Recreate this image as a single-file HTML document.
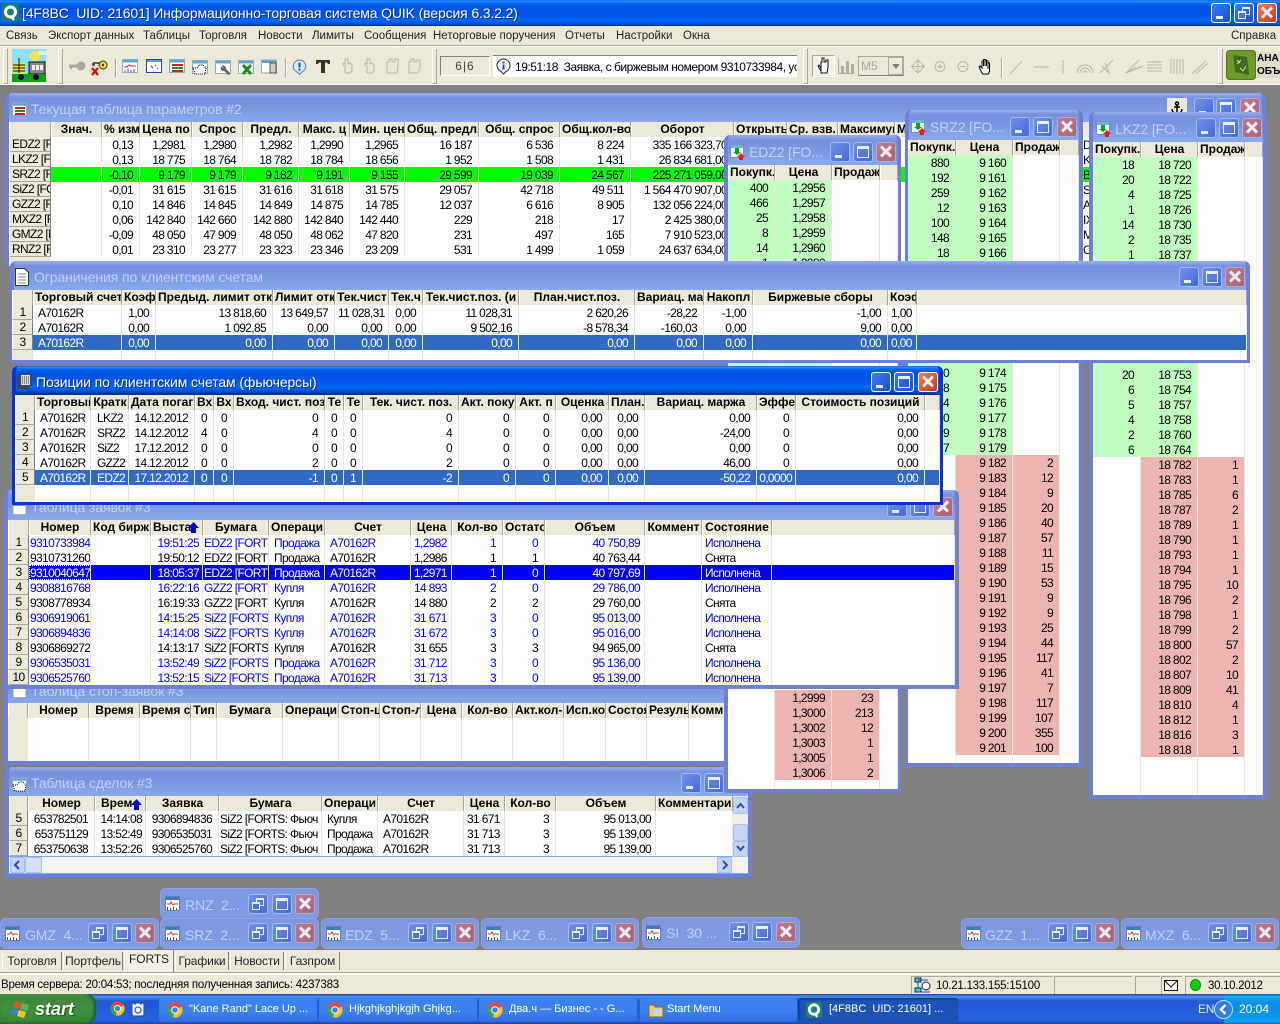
<!DOCTYPE html>
<html><head><meta charset="utf-8"><title>QUIK</title>
<style>
html,body{margin:0;padding:0}
body{position:relative;width:1280px;height:1024px;overflow:hidden;background:#808080;font-family:"Liberation Sans",sans-serif;font-size:12px;color:#000}
.a{position:absolute;white-space:nowrap}
.bar{position:absolute;left:0;width:1280px;background:#ECE9D8}
.w{position:absolute;box-sizing:border-box;border:4px solid #6E7FD8;border-top:0;border-radius:6px 6px 0 0;background:linear-gradient(#9AAEEE 0,#7892DE 5px,#7A96E0 14px,#86A9EA 28px,#86A9EA 32px)}
.w.ac{border-color:#0831D9;background:linear-gradient(#0058EE,#3593FF 1px,#127DFF 2px,#0262EE 4px,#0054E3 7px,#0055EB 15px,#026AFE 21px,#0052D6 25px,#003092 28px)}
.t{position:absolute;white-space:nowrap;font-size:14px;line-height:18px;letter-spacing:-.1px;color:#C3D2F5}
.t.on{color:#fff;text-shadow:1px 1px 0 #0A2C9C}
.b{position:absolute;display:block;box-sizing:border-box;width:20px;height:20px;border:1px solid #A3BBF2;border-radius:3px;background:linear-gradient(135deg,#7092EA,#4467DC)}
.b.x{background:linear-gradient(135deg,#BB7C90,#A96478);border-color:#B9A9CC}
.on .b,.b.on{border-color:#fff;background:linear-gradient(135deg,#3C7BEF,#1B4FD8)}
.b.x.on{background:linear-gradient(135deg,#E8805C,#C8381A)}
.mn::after{content:"";position:absolute;left:4px;top:12px;width:7px;height:3px;background:#EAF0FF}
.mx::after{content:"";position:absolute;left:3px;top:3px;width:12px;height:12px;box-sizing:border-box;border:1px solid #EAF0FF;border-top-width:3px}
.rs::before{content:"";position:absolute;left:7px;top:3px;width:8px;height:8px;box-sizing:border-box;border:1px solid #EAF0FF;border-top-width:2px}
.rs::after{content:"";position:absolute;left:3px;top:7px;width:8px;height:8px;box-sizing:border-box;border:1px solid #EAF0FF;border-top-width:2px;background:#4F73DE}
.x::before,.x::after{content:"";position:absolute;left:2px;top:7px;width:14px;height:3px;background:#F3ECF2}
.x::before{transform:rotate(45deg)}.x::after{transform:rotate(-45deg)}
table{position:absolute;border-collapse:separate;border-spacing:0;table-layout:fixed;background:#fff;font-size:12px}
td,th{height:15px;box-sizing:border-box;overflow:hidden;white-space:nowrap;line-height:15px}
td{padding:1px 6px 0 3px;line-height:14px;text-align:right;letter-spacing:-.65px;border-right:1px solid #ECE9D8}
th{padding:0 1px;background:#ECE9D8;text-align:center;font-weight:bold;font-size:12px;border-left:1px solid #fff;border-right:1px solid #ACA899}
td.h{background:#ECE9D8;text-align:center;padding:0;line-height:14px;border-left:1px solid #fff;border-right:1px solid #808080;border-bottom:1px solid #ACA899}
td.n{text-align:left;padding:0 0 0 2px}
td.l{text-align:left;padding-left:5px}
td.l1{text-align:left;padding-left:1px}
td.c{text-align:left;padding-left:3px}
tr.s td{background:#316AC5;color:#fff}
tr.s td.h{background:#ECE9D8;color:#000}
tr.sb td{background:#00f;color:#fff}
tr.sb td.h{background:#ECE9D8;color:#000}
tr.gr td{background:#0f0}tr.gr td.n{background:#ECE9D8}
tr.bl td{color:#00f}tr.bl td.h{color:#000}
td.g{background:#C1FFC1}td.p{background:#EDB5B1}
tr.sp td{height:0;line-height:0;font-size:0;padding:0}
.grip{position:absolute;top:48px;width:3px;height:34px;border:1px solid;border-color:#fff #ACA899 #ACA899 #fff}
.m{position:absolute;top:29px;font-size:11.5px;line-height:14px;white-space:nowrap;color:#222}
.tab{position:absolute;top:952px;height:18px;box-sizing:border-box;border-left:1px solid #fff;border-right:1px solid #808080;text-align:center;font-size:12px;line-height:18px;letter-spacing:-.1px;color:#222}
.st{position:absolute;top:976px;height:18px;box-sizing:border-box;border-left:1px solid #ACA899;border-top:1px solid #ACA899;font-size:11.5px;line-height:18px;white-space:nowrap}
.tb{position:absolute;top:998px;height:24px;box-sizing:border-box;border-radius:3px;background:linear-gradient(#3B7FF0,#3C81F3 60%,#3169DF);color:#fff;font-size:11px;line-height:23px;white-space:nowrap;padding-left:30px}
.tb svg{position:absolute;left:8px;top:4px}
.ic{position:absolute}
</style></head><body>
<svg width="0" height="0" style="position:absolute">
<symbol id="chrome" viewBox="0 0 16 16"><circle cx="8" cy="8" r="7.5" fill="#E8453C"/><path d="M8 8L14.6 4.5A7.5 7.5 0 0 1 6 15.3Z" fill="#F9C31D"/><path d="M8 8L6 15.3A7.5 7.5 0 0 1 1.4 4.5Z" fill="#2FA84F"/><circle cx="8" cy="8" r="3.8" fill="#fff"/><circle cx="8" cy="8" r="2.8" fill="#3B80EE"/></symbol>
<symbol id="cw" viewBox="0 0 15 15"><rect x=".5" y=".5" width="14" height="14" fill="#fff" stroke="#6A7FA5"/><rect x="1" y="1" width="13" height="3" fill="#3E78C8"/><path d="M2 8h3l1-2 2 3 1-1h4" fill="none" stroke="#E03030"/><path d="M2.5 14v-3M5.5 14v-2M8.5 14v-3M11.5 14v-2" stroke="#2050C0"/></symbol>
<symbol id="dom" viewBox="0 0 16 16"><rect x=".5" y=".5" width="13" height="13" fill="#F3F8FF" stroke="#7A8FB5"/><rect x="1" y="1" width="12" height="3" fill="#6BB4E8"/><path d="M5 4h4v4h2l-4 3-4-3h2z" fill="#16A016"/><path d="M9 16v-3H7l4-4 4 4h-2v3z" fill="#E02020"/></symbol>
<symbol id="tb" viewBox="0 0 16 14"><rect x=".5" y=".5" width="15" height="13" fill="#fff" stroke="#9AA"/><rect x="1" y="1" width="14" height="2.5" fill="#5AA5D8"/></symbol>
</svg>

<!-- main title bar -->
<div class="bar" style="top:0;height:26px;background:linear-gradient(#0058EE,#3593FF 1px,#127DFF 2px,#0262EE 4px,#0054E3 7px,#0055EB 15px,#026AFE 20px,#0052D6 24px,#003092 26px)"></div>
<svg class="ic" style="left:2px;top:4px" width="17" height="17" viewBox="0 0 17 17"><rect width="17" height="17" rx="2" fill="#1F7F6A"/><circle cx="8.5" cy="8" r="5" fill="none" stroke="#fff" stroke-width="3"/><path d="M9 12l3 4" stroke="#fff" stroke-width="2.4"/></svg>
<div class="t on" style="left:22px;top:4px;font-size:14px;letter-spacing:-.13px">[4F8BC&nbsp; UID: 21601] Информационно-торговая система QUIK (версия 6.3.2.2)</div>
<i class="b mn on" style="left:1211px;top:3px"></i><i class="b rs on" style="left:1234px;top:3px"></i><i class="b x on" style="left:1257px;top:3px"></i>

<!-- menu -->
<div class="bar" style="top:26px;height:59px"></div>
<div class="bar" style="top:45px;height:1px;background:#fff;border-top:1px solid #ACA899"></div>
<span class="m" style="left:6px">Связь</span><span class="m" style="left:48px">Экспорт данных</span><span class="m" style="left:143px">Таблицы</span><span class="m" style="left:199px">Торговля</span><span class="m" style="left:258px">Новости</span><span class="m" style="left:312px">Лимиты</span><span class="m" style="left:364px">Сообщения</span><span class="m" style="left:433px">Неторговые поручения</span><span class="m" style="left:565px">Отчеты</span><span class="m" style="left:616px">Настройки</span><span class="m" style="left:683px">Окна</span><span class="m" style="left:1231px">Справка</span>

<!-- toolbar -->
<div class="bar" style="top:84px;height:1px;background:#fff"></div>
<i class="grip" style="left:3px"></i><i class="grip" style="left:58px"></i><i class="grip" style="left:432px"></i><i class="grip" style="left:803px"></i><i class="grip" style="left:1218px"></i>
<svg class="ic" style="left:12px;top:49px" width="34" height="33" viewBox="0 0 34 33"><rect width="34" height="33" fill="#8FE0FA"/><circle cx="23" cy="7" r="5" fill="#FFE23A"/><rect x="26" y="2" width="8" height="4" fill="#E8E8E8"/><rect x="1" y="14" width="12" height="10" fill="#F4E23A"/><path d="M1 16h12M1 19h12M1 22h12M7 9v15" stroke="#111"/><rect x="17" y="13" width="16" height="12" fill="#888" stroke="#111"/><rect x="20" y="16" width="3" height="5" fill="#EEE"/><rect x="24" y="16" width="3" height="5" fill="#EEE"/><rect x="28" y="16" width="3" height="5" fill="#EEE"/><rect y="25" width="34" height="8" fill="#12A012"/><circle cx="9" cy="28" r="3" fill="#111"/><circle cx="24" cy="28" r="3" fill="#111"/></svg>
<svg class="ic" style="left:68px;top:60px" width="18" height="12" viewBox="0 0 18 12"><circle cx="13" cy="6" r="4.5" fill="#A8A8A0"/><rect x="1" y="4.5" width="10" height="3" fill="#A8A8A0"/><rect x="2" y="7" width="2" height="2" fill="#A8A8A0"/></svg>
<svg class="ic" style="left:91px;top:60px" width="17" height="16" viewBox="0 0 17 16"><circle cx="12" cy="5" r="4" fill="#F3D92C" stroke="#333"/><circle cx="12" cy="5" r="1.2" fill="#333"/><path d="M2 3h7M2 3v2h2" stroke="#333" stroke-width="1.5" fill="none"/><path d="M1 8l6 7M7 8l-6 7" stroke="#D81010" stroke-width="2.4"/></svg>
<i class="a" style="left:115px;top:58px;width:1px;height:20px;background:#ACA899;border-right:1px solid #fff"></i>
<svg class="ic" style="left:122px;top:59px" width="16" height="14"><use href="#tb"/><path d="M2 8h3l2-2 2 1h5" fill="none" stroke="#D03030"/><path d="M3 13v-2M6 13v-3M9 13v-2M12 13v-3" stroke="#3060C0"/></svg>
<svg class="ic" style="left:146px;top:59px" width="16" height="14"><rect x=".5" y=".5" width="15" height="13" fill="#fff" stroke="#2040B0"/><rect x="1" y="1" width="14" height="2" fill="#5AA5D8"/><path d="M5 7l2 2M9 6l1 1M11 9l1 1" stroke="#D02020"/></svg>
<svg class="ic" style="left:169px;top:59px" width="16" height="14"><use href="#tb"/><rect x="3" y="5" width="11" height="2" fill="#D02020"/><rect x="3" y="8" width="11" height="2" fill="#18A018"/><rect x="3" y="11" width="11" height="2" fill="#D02020"/></svg>
<svg class="ic" style="left:192px;top:59px" width="16" height="16"><use href="#tb"/><path d="M1 9h4l2-3 4 0 3 3-1 6H3z" fill="#fff" stroke="#000" stroke-dasharray="1 1"/></svg>
<svg class="ic" style="left:215px;top:59px" width="16" height="16"><use href="#tb"/><path d="M7 7a2.6 2.6 0 0 1 3.6 3l4.4 4.4-1.5 1.5-4.4-4.4a2.6 2.6 0 0 1-3-3.6l2 1.6 1-1z" fill="#666" stroke="#333" stroke-width=".5"/></svg>
<svg class="ic" style="left:238px;top:59px" width="16" height="16"><use href="#tb"/><path d="M5 6l8 9M13 6l-8 9" stroke="#1E8C1E" stroke-width="3"/></svg>
<svg class="ic" style="left:261px;top:59px" width="16" height="15"><use href="#tb"/><rect x="9" y="4" width="6" height="10" fill="#ccc" stroke="#555"/></svg>
<i class="a" style="left:285px;top:58px;width:1px;height:20px;background:#ACA899;border-right:1px solid #fff"></i>
<svg class="ic" style="left:292px;top:59px" width="15" height="16" viewBox="0 0 15 16"><path d="M7.5 1a6.2 6.2 0 0 1 2.5 11.9L7.5 15.5 5 12.9A6.2 6.2 0 0 1 7.5 1z" fill="#DCEBFA" stroke="#5080C0"/><rect x="6.5" y="3.5" width="2" height="5" fill="#1848C0"/><rect x="6.5" y="9.5" width="2" height="2" fill="#1848C0"/></svg>
<svg class="ic" style="left:316px;top:60px" width="14" height="13" viewBox="0 0 14 13"><path d="M0 0h14v4h-2l-1-1.500H9V13H5V2.500H3L2 4H0z" fill="#333"/></svg>
<svg class="ic" style="left:340px;top:57px" width="84" height="18" viewBox="0 0 84 18" fill="#ECE9D8" stroke="#B8B5A6"><path d="M5 16V9l-2-1V6l2 1V2h3v5l2-1 2 2v6l-2 2z"/><path d="M27 16V9l-2-1V6l2 1V2h3v5l2-1 2 2v6l-2 2z"/><path d="M47 16V5h2v-3h3v3h3v-3h3v6l-1 8z"/><path d="M69 16V5h2v-3h3v3h3v-2h3v8l-2 5z"/></svg>
<div class="a" style="left:440px;top:56px;width:50px;height:20px;box-sizing:border-box;border:1px solid;border-color:#808080 #fff #fff #808080;text-align:center;line-height:18px;color:#444;letter-spacing:1px">6|6</div>
<div class="a" style="left:493px;top:55px;width:304px;height:22px;background:#fff;border-top:1px solid #808080;box-sizing:border-box;overflow:hidden;line-height:22px;padding-left:22px;letter-spacing:-.47px">19:51:18&nbsp; Заявка, с биржевым номером 9310733984, ус</div>
<svg class="ic" style="left:496px;top:58px" width="15" height="17" viewBox="0 0 15 17"><path d="M7.500 1a6.500 6.500 0 0 1 2.500 12.500L7.500 16 5 13.500A6.500 6.500 0 0 1 7.500 1z" fill="#fff" stroke="#222"/><rect x="6.500" y="6.500" width="2" height="5" fill="#1848C0"/><rect x="6.500" y="3.500" width="2" height="2" fill="#1848C0"/></svg>
<div class="a" style="left:812px;top:55px;width:23px;height:22px;box-sizing:border-box;background:#F4F2E8;border:1px solid;border-color:#ACA899 #fff #fff #ACA899"></div>
<svg class="ic" style="left:816px;top:57px" width="15" height="18" viewBox="0 0 15 18"><path d="M5 16V5h1V1h2v4h2V3h2v7l-1 6zM5 11L3 8l-1 1 3 5" fill="#fff" stroke="#111"/></svg>
<svg class="ic" style="left:838px;top:58px" width="16" height="16"><path d="M.5 0v15.500H16" stroke="#B0AD9E" fill="none"/><rect x="3" y="8" width="3" height="7" fill="#B0AD9E"/><rect x="8" y="3" width="3" height="12" fill="#B0AD9E"/><rect x="13" y="6" width="3" height="9" fill="#B0AD9E"/></svg>
<div class="a" style="left:858px;top:56px;width:46px;height:20px;box-sizing:border-box;border:1px solid #ACA899;border-bottom-color:#808080;line-height:18px;color:#ACA899;padding-left:2px;font-size:12px;background:#ECE9D8">M5</div>
<div class="a" style="left:888px;top:57px;width:15px;height:18px;box-sizing:border-box;border:1px solid #ACA899;background:#ECE9D8"></div>
<svg class="ic" style="left:892px;top:64px" width="8" height="5"><path d="M0 0h8L4 5z" fill="#808080"/></svg>
<svg class="ic" style="left:910px;top:59px" width="70" height="15" viewBox="0 0 70 15" fill="none" stroke="#B8B5A6"><path d="M8 1v13M1.500 7.500h13M8 1L5 4M8 1l3 3M8 14l-3-3M8 14l3-3M1.500 7.500l3-3M1.500 7.500l3 3M14.500 7.500l-3-3M14.500 7.500l-3 3"/><circle cx="30" cy="7.500" r="5"/><path d="M30 5v5M27.500 7.500h5"/><circle cx="53" cy="7.500" r="5"/><path d="M50.500 7.500h5"/></svg>
<svg class="ic" style="left:978px;top:58px" width="16" height="17" viewBox="0 0 16 17"><path d="M4 15L1 9l1-1 2 2V3h1.500v5V1.500H7V8V2h1.500v6V3H10v8V5h1.500v8l-1 3H5z" fill="#fff" stroke="#000"/></svg>
<i class="a" style="left:1001px;top:58px;width:1px;height:20px;background:#ACA899;border-right:1px solid #fff"></i>
<svg class="ic" style="left:1008px;top:58px" width="200" height="17" viewBox="0 0 200 17" fill="none" stroke="#B8B5A6"><path d="M2 16L14 3M26 9h15M55 2v14M69 15a8 8 0 0 1 16 0M72 15a5 5 0 0 1 10 0M75 15a2 2 0 0 1 4 0M92 15L105 2M94 8l8 8M97 5l4 10M118 15L135 8M118 15L131 2M118 15l10-6M139 4h15M139 7h15M139 10h15M139 13h15M163 1v15M166 1v15M169 1v15M172 1v15M175 1v15M184 16L198 3M188 16L200 5"/></svg>
<svg class="ic" style="left:1226px;top:50px" width="30" height="30" viewBox="0 0 30 30"><rect x=".5" y=".5" width="29" height="29" rx="3" fill="#6E9A2E" stroke="#4F7A1C"/><path d="M7 5l14 2 2 18-14-3z" fill="#3F6B1E"/><path d="M11 10l3 3M15 10l-4 4M14 18l3 3 3-5" stroke="#C8DC8E" fill="none"/></svg>
<div class="a" style="left:1257px;top:52px;width:23px;height:26px;overflow:hidden;font-weight:bold;font-size:10px;line-height:13px;background:#DEDCCF">АНА<br>ОБЪ</div>

<!-- W1 params -->
<div class="w" style="left:5px;top:93px;width:1261px;height:173px"></div>
<div class="a" style="left:9px;top:122px;width:1254px;height:144px;background:#fff"></div>
<div class="a" style="left:9px;top:257px;width:41px;height:9px;background:#ECE9D8"></div>
<svg class="ic" style="left:12px;top:102px" width="15" height="14"><use href="#tb"/><rect x="3" y="5" width="10" height="2" fill="#D02020"/><rect x="3" y="8" width="10" height="2" fill="#18A018"/><rect x="3" y="11" width="10" height="2" fill="#D02020"/></svg>
<div class="t" style="left:31px;top:100px">Текущая таблица параметров #2</div>
<div class="a" style="left:1167px;top:98px;width:20px;height:20px;background:#ECE9D8"></div>
<svg class="ic" style="left:1171px;top:101px" width="12" height="14" viewBox="0 0 12 14" fill="none" stroke="#000" stroke-width="1.500"><circle cx="6" cy="2.500" r="1.500"/><path d="M6 4v9M3 6h6M1 8c0 3 2 4.500 5 5 3-.5 5-2 5-5"/></svg>
<i class="b mn" style="left:1194px;top:98px"></i><i class="b mx" style="left:1216px;top:98px"></i><i class="b x" style="left:1240px;top:98px"></i>
<table style="left:9px;top:122px;width:1254px">
<colgroup><col style="width:42px"><col style="width:51px"><col style="width:38px"><col style="width:52px"><col style="width:51px"><col style="width:56px"><col style="width:51px"><col style="width:55px"><col style="width:74px"><col style="width:81px"><col style="width:71px"><col style="width:103px"><col style="width:53px"><col style="width:51px"><col style="width:57px"><col style="width:187px"><col style="width:181px"></colgroup>
<tr><th></th><th>Знач.</th><th>% изм</th><th>Цена по</th><th>Спрос</th><th>Предл.</th><th>Макс. ц</th><th>Мин. цен</th><th>Общ. предл.</th><th>Общ. спрос</th><th>Общ.кол-во</th><th>Оборот</th><th>Открыть</th><th>Ср. взв.</th><th>Максимум</th><th style="text-align:left">М</th><th></th></tr>
<tr><td class="h n">EDZ2 [F</td><td></td><td>0,13</td><td>1,2981</td><td>1,2980</td><td>1,2982</td><td>1,2990</td><td>1,2965</td><td>16 187</td><td>6 536</td><td>8 224</td><td>335 166 323,70</td><td></td><td></td><td></td><td></td><td class="l1">D</td></tr>
<tr><td class="h n">LKZ2 [F</td><td></td><td>0,13</td><td>18 775</td><td>18 764</td><td>18 782</td><td>18 784</td><td>18 656</td><td>1 952</td><td>1 508</td><td>1 431</td><td>26 834 681,00</td><td></td><td></td><td></td><td></td><td class="l1">K</td></tr>
<tr class="gr"><td class="h n">SRZ2 [F</td><td></td><td>-0,10</td><td>9 179</td><td>9 179</td><td>9 182</td><td>9 191</td><td>9 155</td><td>29 599</td><td>19 039</td><td>24 567</td><td>225 271 059,00</td><td></td><td></td><td></td><td></td><td class="l1">B</td></tr>
<tr><td class="h n">SiZ2 [FC</td><td></td><td>-0,01</td><td>31 615</td><td>31 615</td><td>31 616</td><td>31 618</td><td>31 575</td><td>29 057</td><td>42 718</td><td>49 511</td><td>1 564 470 907,00</td><td></td><td></td><td></td><td></td><td class="l1">Si</td></tr>
<tr><td class="h n">GZZ2 [F</td><td></td><td>0,10</td><td>14 846</td><td>14 845</td><td>14 849</td><td>14 875</td><td>14 785</td><td>12 037</td><td>6 616</td><td>8 905</td><td>132 056 224,00</td><td></td><td></td><td></td><td></td><td class="l1">A</td></tr>
<tr><td class="h n">MXZ2 [F</td><td></td><td>0,06</td><td>142 840</td><td>142 660</td><td>142 880</td><td>142 840</td><td>142 440</td><td>229</td><td>218</td><td>17</td><td>2 425 380,00</td><td></td><td></td><td></td><td></td><td class="l1">IX</td></tr>
<tr><td class="h n">GMZ2 [F</td><td></td><td>-0,09</td><td>48 050</td><td>47 909</td><td>48 050</td><td>48 062</td><td>47 820</td><td>231</td><td>497</td><td>165</td><td>7 910 523,00</td><td></td><td></td><td></td><td></td><td class="l1">M</td></tr>
<tr><td class="h n">RNZ2 [F</td><td></td><td>0,01</td><td>23 310</td><td>23 277</td><td>23 323</td><td>23 346</td><td>23 209</td><td>531</td><td>1 499</td><td>1 059</td><td>24 637 634,00</td><td></td><td></td><td></td><td></td><td class="l1">C</td></tr>
</table>

<!-- W5 stop orders -->
<div class="w" style="left:4px;top:675px;width:740px;height:90px"></div>
<svg class="ic" style="left:12px;top:686px" width="15" height="12"><use href="#tb"/></svg>
<div class="t" style="left:31px;top:682px">Таблица стоп-заявок #3</div>
<table style="left:8px;top:703px;width:717px">
<colgroup><col style="width:20px"><col style="width:61px"><col style="width:51px"><col style="width:51px"><col style="width:26px"><col style="width:66px"><col style="width:56px"><col style="width:41px"><col style="width:41px"><col style="width:41px"><col style="width:51px"><col style="width:51px"><col style="width:42px"><col style="width:41px"><col style="width:42px"><col style="width:36px"></colgroup>
<tr><th></th><th>Номер</th><th>Время</th><th>Время с</th><th>Тип</th><th>Бумага</th><th>Операци</th><th>Стоп-ц</th><th>Стоп-л</th><th>Цена</th><th>Кол-во</th><th>Акт.кол-</th><th>Исп.ко</th><th>Состоя</th><th>Резуль</th><th>Комм</th></tr>
<tr style="height:43px"><td class="h" style="height:43px;border:0"></td><td></td><td></td><td></td><td></td><td></td><td></td><td></td><td></td><td></td><td></td><td></td><td></td><td></td><td></td><td></td></tr>
</table>

<!-- W6 trades -->
<div class="w" style="left:5px;top:767px;width:747px;height:111px"></div>
<svg class="ic" style="left:12px;top:776px" width="15" height="16"><use href="#tb"/><path d="M1 9h4l2-3 4 0 3 3-1 6H3z" fill="#fff" stroke="#000" stroke-dasharray="1 1"/></svg>
<div class="t" style="left:31px;top:774px">Таблица сделок #3</div>
<i class="b mn" style="left:681px;top:773px"></i><i class="b mx" style="left:704px;top:773px"></i>
<table style="left:9px;top:796px;width:724px">
<colgroup><col style="width:19px"><col style="width:67px"><col style="width:51px"><col style="width:73px"><col style="width:103px"><col style="width:56px"><col style="width:86px"><col style="width:41px"><col style="width:51px"><col style="width:100px"><col style="width:77px"></colgroup>
<tr><th></th><th>Номер</th><th style="text-align:left;padding-left:5px">Врем</th><th>Заявка</th><th>Бумага</th><th>Операци</th><th>Счет</th><th>Цена</th><th>Кол-во</th><th>Объем</th><th>Комментари</th></tr>
<tr><td class="h">5</td><td>653782501</td><td style="padding-right:3px">14:14:08</td><td>9306894836</td><td class="l1">SiZ2 [FORTS: Фьюч</td><td class="l">Купля</td><td class="l">A70162R</td><td class="c">31 671</td><td>3</td><td style="padding-right:4px">95 013,00</td><td></td></tr>
<tr><td class="h">6</td><td>653751129</td><td style="padding-right:3px">13:52:49</td><td>9306535031</td><td class="l1">SiZ2 [FORTS: Фьюч</td><td class="l">Продажа</td><td class="l">A70162R</td><td class="c">31 713</td><td>3</td><td style="padding-right:4px">95 139,00</td><td></td></tr>
<tr><td class="h">7</td><td>653750638</td><td style="padding-right:3px">13:52:26</td><td>9306525760</td><td class="l1">SiZ2 [FORTS: Фьюч</td><td class="l">Продажа</td><td class="l">A70162R</td><td class="c">31 713</td><td>3</td><td style="padding-right:4px">95 139,00</td><td></td></tr>
</table>
<svg class="ic" style="left:131px;top:799px" width="11" height="11"><path d="M5.500 0L11 6H8v5H3V6H0z" fill="#0000D0"/></svg>
<div class="a" style="left:733px;top:796px;width:15px;height:61px;background:#F1F0E8"></div>
<div class="a" style="left:733px;top:797px;width:15px;height:17px;box-sizing:border-box;border:1px solid #A8BDF0;border-radius:2px;background:#C4D4F8"></div>
<div class="a" style="left:733px;top:824px;width:15px;height:17px;box-sizing:border-box;border:1px solid #A8BDF0;border-radius:2px;background:#C4D4F8"></div>
<div class="a" style="left:733px;top:841px;width:15px;height:16px;box-sizing:border-box;border:1px solid #A8BDF0;border-radius:2px;background:#C4D4F8"></div>
<svg class="ic" style="left:736px;top:801px" width="9" height="52" fill="none" stroke="#2A4DA8" stroke-width="2"><path d="M1 7l3.500-4L8 7M1 45l3.500 4L8 45"/></svg>
<div class="a" style="left:9px;top:857px;width:739px;height:16px;background:#F4F3EA"></div>
<div class="a" style="left:10px;top:857px;width:15px;height:16px;box-sizing:border-box;border:1px solid #A8BDF0;border-radius:2px;background:#C4D4F8"></div>
<div class="a" style="left:25px;top:857px;width:17px;height:16px;box-sizing:border-box;border:1px solid #A8BDF0;border-radius:2px;background:#D4E0FA"></div>
<div class="a" style="left:717px;top:857px;width:15px;height:16px;box-sizing:border-box;border:1px solid #A8BDF0;border-radius:2px;background:#C4D4F8"></div>
<svg class="ic" style="left:13px;top:860px" width="9" height="10" fill="none" stroke="#2A4DA8" stroke-width="2"><path d="M6 1L2 5l4 4"/></svg>
<svg class="ic" style="left:720px;top:860px" width="9" height="10" fill="none" stroke="#2A4DA8" stroke-width="2"><path d="M3 1l4 4-4 4"/></svg>

<!-- EDZ2 -->
<div class="w" style="left:724px;top:135px;width:177px;height:658px"></div>
<div class="a" style="left:728px;top:165px;width:170px;height:624px;background:#fff"></div>
<svg class="ic" style="left:730px;top:144px" width="16" height="16"><use href="#dom"/></svg>
<div class="t" style="left:749px;top:143px">EDZ2 [FO...</div>
<i class="b mn" style="left:830px;top:142px"></i><i class="b mx" style="left:853px;top:142px"></i><i class="b x" style="left:876px;top:142px"></i>
<table style="left:728px;top:165px;width:170px">
<colgroup><col style="width:47px"><col style="width:57px"><col style="width:48px"><col style="width:18px"></colgroup>
<tr><th>Покупк.</th><th>Цена</th><th>Продаж</th><th></th></tr>
<tr><td class="g">400</td><td class="g">1,2956</td><td></td><td></td></tr>
<tr><td class="g">466</td><td class="g">1,2957</td><td></td><td></td></tr>
<tr><td class="g">25</td><td class="g">1,2958</td><td></td><td></td></tr>
<tr><td class="g">8</td><td class="g">1,2959</td><td></td><td></td></tr>
<tr><td class="g">14</td><td class="g">1,2960</td><td></td><td></td></tr>
<tr><td class="g">1</td><td class="g">1,2980</td><td></td><td></td></tr>
<tr><td class="g" style="height:105px"></td><td class="g"></td><td></td><td></td></tr>
</table>
<table style="left:728px;top:690px;width:170px">
<colgroup><col style="width:47px"><col style="width:57px"><col style="width:48px"><col style="width:18px"></colgroup>
<tr><td></td><td class="p">1,2999</td><td class="p">23</td><td></td></tr>
<tr><td></td><td class="p">1,3000</td><td class="p">213</td><td></td></tr>
<tr><td></td><td class="p">1,3002</td><td class="p">12</td><td></td></tr>
<tr><td></td><td class="p">1,3003</td><td class="p">1</td><td></td></tr>
<tr><td></td><td class="p">1,3005</td><td class="p">1</td><td></td></tr>
<tr><td></td><td class="p">1,3006</td><td class="p">2</td><td></td></tr>
<tr class="sp"><td style="height:9px"></td><td></td><td></td><td></td></tr>
</table>

<!-- SRZ2 -->
<div class="w" style="left:905px;top:110px;width:178px;height:657px"></div>
<div class="a" style="left:908px;top:140px;width:171px;height:623px;background:#fff"></div>
<svg class="ic" style="left:911px;top:119px" width="16" height="16"><use href="#dom"/></svg>
<div class="t" style="left:930px;top:118px">SRZ2 [FO...</div>
<i class="b mn" style="left:1010px;top:117px"></i><i class="b mx" style="left:1033px;top:117px"></i><i class="b x" style="left:1057px;top:117px"></i>
<table style="left:908px;top:140px;width:171px">
<colgroup><col style="width:48px"><col style="width:57px"><col style="width:47px"><col style="width:19px"></colgroup>
<tr><th>Покупк.</th><th>Цена</th><th>Продаж</th><th></th></tr>
<tr><td class="g">880</td><td class="g">9 160</td><td></td><td></td></tr>
<tr><td class="g">192</td><td class="g">9 161</td><td></td><td></td></tr>
<tr><td class="g">259</td><td class="g">9 162</td><td></td><td></td></tr>
<tr><td class="g">12</td><td class="g">9 163</td><td></td><td></td></tr>
<tr><td class="g">100</td><td class="g">9 164</td><td></td><td></td></tr>
<tr><td class="g">148</td><td class="g">9 165</td><td></td><td></td></tr>
<tr><td class="g">18</td><td class="g">9 166</td><td></td><td></td></tr>
<tr><td class="g" style="height:105px"></td><td class="g"></td><td></td><td></td></tr>
<tr><td class="g">20</td><td class="g">9 174</td><td></td><td></td></tr>
<tr><td class="g">18</td><td class="g">9 175</td><td></td><td></td></tr>
<tr><td class="g">14</td><td class="g">9 176</td><td></td><td></td></tr>
<tr><td class="g">10</td><td class="g">9 177</td><td></td><td></td></tr>
<tr><td class="g">9</td><td class="g">9 178</td><td></td><td></td></tr>
<tr><td class="g">7</td><td class="g">9 179</td><td></td><td></td></tr>
<tr><td></td><td class="p">9 182</td><td class="p">2</td><td></td></tr>
<tr><td></td><td class="p">9 183</td><td class="p">12</td><td></td></tr>
<tr><td></td><td class="p">9 184</td><td class="p">9</td><td></td></tr>
<tr><td></td><td class="p">9 185</td><td class="p">20</td><td></td></tr>
<tr><td></td><td class="p">9 186</td><td class="p">40</td><td></td></tr>
<tr><td></td><td class="p">9 187</td><td class="p">57</td><td></td></tr>
<tr><td></td><td class="p">9 188</td><td class="p">11</td><td></td></tr>
<tr><td></td><td class="p">9 189</td><td class="p">15</td><td></td></tr>
<tr><td></td><td class="p">9 190</td><td class="p">53</td><td></td></tr>
<tr><td></td><td class="p">9 191</td><td class="p">9</td><td></td></tr>
<tr><td></td><td class="p">9 192</td><td class="p">9</td><td></td></tr>
<tr><td></td><td class="p">9 193</td><td class="p">25</td><td></td></tr>
<tr><td></td><td class="p">9 194</td><td class="p">44</td><td></td></tr>
<tr><td></td><td class="p">9 195</td><td class="p">117</td><td></td></tr>
<tr><td></td><td class="p">9 196</td><td class="p">41</td><td></td></tr>
<tr><td></td><td class="p">9 197</td><td class="p">7</td><td></td></tr>
<tr><td></td><td class="p">9 198</td><td class="p">117</td><td></td></tr>
<tr><td></td><td class="p">9 199</td><td class="p">107</td><td></td></tr>
<tr><td></td><td class="p">9 200</td><td class="p">355</td><td></td></tr>
<tr><td></td><td class="p">9 201</td><td class="p">100</td><td></td></tr>
<tr class="sp"><td style="height:8px"></td><td></td><td></td><td></td></tr>
</table>

<!-- LKZ2 -->
<div class="w" style="left:1089px;top:112px;width:178px;height:687px"></div>
<div class="a" style="left:1093px;top:142px;width:170px;height:653px;background:#fff"></div>
<svg class="ic" style="left:1096px;top:121px" width="16" height="16"><use href="#dom"/></svg>
<div class="t" style="left:1115px;top:120px">LKZ2 [FO...</div>
<i class="b mn" style="left:1196px;top:118px"></i><i class="b mx" style="left:1219px;top:118px"></i><i class="b x" style="left:1242px;top:118px"></i>
<table style="left:1093px;top:142px;width:170px">
<colgroup><col style="width:48px"><col style="width:57px"><col style="width:47px"><col style="width:18px"></colgroup>
<tr><th>Покупк.</th><th>Цена</th><th>Продаж</th><th></th></tr>
<tr><td class="g">18</td><td class="g">18 720</td><td></td><td></td></tr>
<tr><td class="g">20</td><td class="g">18 722</td><td></td><td></td></tr>
<tr><td class="g">4</td><td class="g">18 725</td><td></td><td></td></tr>
<tr><td class="g">1</td><td class="g">18 726</td><td></td><td></td></tr>
<tr><td class="g">14</td><td class="g">18 730</td><td></td><td></td></tr>
<tr><td class="g">2</td><td class="g">18 735</td><td></td><td></td></tr>
<tr><td class="g">1</td><td class="g">18 737</td><td></td><td></td></tr>
<tr><td class="g" style="height:105px"></td><td class="g"></td><td></td><td></td></tr>
<tr><td class="g">20</td><td class="g">18 753</td><td></td><td></td></tr>
<tr><td class="g">6</td><td class="g">18 754</td><td></td><td></td></tr>
<tr><td class="g">5</td><td class="g">18 757</td><td></td><td></td></tr>
<tr><td class="g">4</td><td class="g">18 758</td><td></td><td></td></tr>
<tr><td class="g">2</td><td class="g">18 760</td><td></td><td></td></tr>
<tr><td class="g">6</td><td class="g">18 764</td><td></td><td></td></tr>
<tr><td></td><td class="p">18 782</td><td class="p">1</td><td></td></tr>
<tr><td></td><td class="p">18 783</td><td class="p">1</td><td></td></tr>
<tr><td></td><td class="p">18 785</td><td class="p">6</td><td></td></tr>
<tr><td></td><td class="p">18 787</td><td class="p">2</td><td></td></tr>
<tr><td></td><td class="p">18 789</td><td class="p">1</td><td></td></tr>
<tr><td></td><td class="p">18 790</td><td class="p">1</td><td></td></tr>
<tr><td></td><td class="p">18 793</td><td class="p">1</td><td></td></tr>
<tr><td></td><td class="p">18 794</td><td class="p">1</td><td></td></tr>
<tr><td></td><td class="p">18 795</td><td class="p">10</td><td></td></tr>
<tr><td></td><td class="p">18 796</td><td class="p">2</td><td></td></tr>
<tr><td></td><td class="p">18 798</td><td class="p">1</td><td></td></tr>
<tr><td></td><td class="p">18 799</td><td class="p">2</td><td></td></tr>
<tr><td></td><td class="p">18 800</td><td class="p">57</td><td></td></tr>
<tr><td></td><td class="p">18 802</td><td class="p">2</td><td></td></tr>
<tr><td></td><td class="p">18 807</td><td class="p">10</td><td></td></tr>
<tr><td></td><td class="p">18 809</td><td class="p">41</td><td></td></tr>
<tr><td></td><td class="p">18 810</td><td class="p">4</td><td></td></tr>
<tr><td></td><td class="p">18 812</td><td class="p">1</td><td></td></tr>
<tr><td></td><td class="p">18 816</td><td class="p">3</td><td></td></tr>
<tr><td></td><td class="p">18 818</td><td class="p">1</td><td></td></tr>
<tr class="sp"><td style="height:38px"></td><td></td><td></td><td></td></tr>
</table>

<!-- W2 limits -->
<div class="w" style="left:10px;top:261px;width:1240px;height:102px"></div>
<svg class="ic" style="left:15px;top:268px" width="14" height="18" viewBox="0 0 14 18"><path d="M.5.5h9l4 4v13H.500z" fill="#fff" stroke="#333"/><path d="M3 6h8M3 9h8M3 12h8M3 15h8" stroke="#888"/></svg>
<div class="t" style="left:34px;top:268px">Ограничения по клиентским счетам</div>
<i class="b mn" style="left:1179px;top:267px"></i><i class="b mx" style="left:1202px;top:267px"></i><i class="b x" style="left:1225px;top:267px"></i>
<table style="left:12px;top:290px;width:1235px">
<colgroup><col style="width:21px"><col style="width:89px"><col style="width:34px"><col style="width:117px"><col style="width:62px"><col style="width:54px"><col style="width:34px"><col style="width:96px"><col style="width:116px"><col style="width:69px"><col style="width:49px"><col style="width:135px"><col style="width:29px"><col style="width:330px"></colgroup>
<tr><th></th><th>Торговый счет</th><th>Коэф</th><th>Предыд. лимит отк</th><th>Лимит отк</th><th>Тек.чист</th><th>Тек.ч</th><th>Тек.чист.поз. (и</th><th>План.чист.поз.</th><th>Вариац. ма</th><th>Накопл</th><th>Биржевые сборы</th><th>Коэф</th><th></th></tr>
<tr><td class="h">1</td><td class="l">A70162R</td><td>1,00</td><td>13 818,60</td><td>13 649,57</td><td>11 028,31</td><td>0,00</td><td>11 028,31</td><td>2 620,26</td><td>-28,22</td><td>-1,00</td><td>-1,00</td><td>1,00</td><td></td></tr>
<tr><td class="h">2</td><td class="l">A70162R</td><td>0,00</td><td>1 092,85</td><td>0,00</td><td>0,00</td><td>0,00</td><td>9 502,16</td><td>-8 578,34</td><td>-160,03</td><td>0,00</td><td>9,00</td><td>0,00</td><td></td></tr>
<tr class="s"><td class="h">3</td><td class="l">A70162R</td><td>0,00</td><td>0,00</td><td>0,00</td><td>0,00</td><td>0,00</td><td>0,00</td><td>0,00</td><td>0,00</td><td>0,00</td><td>0,00</td><td>0,00</td><td></td></tr>
<tr class="sp"><td style="height:10px;background:#ECE9D8"></td><td></td><td></td><td></td><td></td><td></td><td></td><td></td><td></td><td></td><td></td><td></td><td></td><td></td></tr>
</table>

<!-- W4 orders -->
<div class="w" style="left:4px;top:490px;width:955px;height:199px"></div>
<svg class="ic" style="left:12px;top:503px" width="15" height="12"><use href="#tb"/></svg>
<div class="t" style="left:31px;top:498px">Таблица заявок #3</div>
<i class="b mn" style="left:887px;top:497px"></i><i class="b mx" style="left:910px;top:497px"></i><i class="b x" style="left:933px;top:497px"></i>
<table style="left:8px;top:520px;width:947px">
<colgroup><col style="width:21px"><col style="width:62px"><col style="width:60px"><col style="width:52px"><col style="width:66px"><col style="width:56px"><col style="width:86px"><col style="width:41px"><col style="width:51px"><col style="width:42px"><col style="width:100px"><col style="width:57px"><col style="width:70px"><col style="width:183px"></colgroup>
<tr><th></th><th>Номер</th><th>Код бирж</th><th style="text-align:left">Выста</th><th>Бумага</th><th>Операци</th><th>Счет</th><th>Цена</th><th>Кол-во</th><th>Остато</th><th>Объем</th><th>Коммент</th><th>Состояние</th><th></th></tr>
<tr class="bl"><td class="h">1</td><td class="l1">9310733984</td><td></td><td style="padding-right:3px">19:51:25</td><td class="l1">EDZ2 [FORTS</td><td class="l">Продажа</td><td class="l">A70162R</td><td class="c">1,2982</td><td>1</td><td>0</td><td style="padding-right:4px">40 750,89</td><td></td><td class="c">Исполнена</td><td></td></tr>
<tr><td class="h">2</td><td class="l1">9310731260</td><td></td><td style="padding-right:3px">19:50:12</td><td class="l1">EDZ2 [FORTS</td><td class="l">Продажа</td><td class="l">A70162R</td><td class="c">1,2986</td><td>1</td><td>1</td><td style="padding-right:4px">40 763,44</td><td></td><td class="c">Снята</td><td></td></tr>
<tr class="sb"><td class="h">3</td><td class="l1" style="outline:1px dotted #fff;outline-offset:-1px">9310040647</td><td></td><td style="padding-right:3px">18:05:37</td><td class="l1">EDZ2 [FORTS</td><td class="l">Продажа</td><td class="l">A70162R</td><td class="c">1,2971</td><td>1</td><td>0</td><td style="padding-right:4px">40 797,69</td><td></td><td class="c">Исполнена</td><td></td></tr>
<tr class="bl"><td class="h">4</td><td class="l1">9308816768</td><td></td><td style="padding-right:3px">16:22:16</td><td class="l1">GZZ2 [FORTS</td><td class="l">Купля</td><td class="l">A70162R</td><td class="c">14 893</td><td>2</td><td>0</td><td style="padding-right:4px">29 786,00</td><td></td><td class="c">Исполнена</td><td></td></tr>
<tr><td class="h">5</td><td class="l1">9308778934</td><td></td><td style="padding-right:3px">16:19:33</td><td class="l1">GZZ2 [FORTS</td><td class="l">Купля</td><td class="l">A70162R</td><td class="c">14 880</td><td>2</td><td>2</td><td style="padding-right:4px">29 760,00</td><td></td><td class="c">Снята</td><td></td></tr>
<tr class="bl"><td class="h">6</td><td class="l1">9306919061</td><td></td><td style="padding-right:3px">14:15:25</td><td class="l1">SiZ2 [FORTS</td><td class="l">Купля</td><td class="l">A70162R</td><td class="c">31 671</td><td>3</td><td>0</td><td style="padding-right:4px">95 013,00</td><td></td><td class="c">Исполнена</td><td></td></tr>
<tr class="bl"><td class="h">7</td><td class="l1">9306894836</td><td></td><td style="padding-right:3px">14:14:08</td><td class="l1">SiZ2 [FORTS</td><td class="l">Купля</td><td class="l">A70162R</td><td class="c">31 672</td><td>3</td><td>0</td><td style="padding-right:4px">95 016,00</td><td></td><td class="c">Исполнена</td><td></td></tr>
<tr><td class="h">8</td><td class="l1">9306869272</td><td></td><td style="padding-right:3px">14:13:17</td><td class="l1">SiZ2 [FORTS</td><td class="l">Купля</td><td class="l">A70162R</td><td class="c">31 655</td><td>3</td><td>3</td><td style="padding-right:4px">94 965,00</td><td></td><td class="c">Снята</td><td></td></tr>
<tr class="bl"><td class="h">9</td><td class="l1">9306535031</td><td></td><td style="padding-right:3px">13:52:49</td><td class="l1">SiZ2 [FORTS</td><td class="l">Продажа</td><td class="l">A70162R</td><td class="c">31 712</td><td>3</td><td>0</td><td style="padding-right:4px">95 136,00</td><td></td><td class="c">Исполнена</td><td></td></tr>
<tr class="bl"><td class="h">10</td><td class="l1">9306525760</td><td></td><td style="padding-right:3px">13:52:15</td><td class="l1">SiZ2 [FORTS</td><td class="l">Продажа</td><td class="l">A70162R</td><td class="c">31 713</td><td>3</td><td>0</td><td style="padding-right:4px">95 139,00</td><td></td><td class="c">Исполнена</td><td></td></tr>
</table>
<svg class="ic" style="left:188px;top:522px" width="11" height="11"><path d="M5.500 0L11 6H8v5H3V6H0z" fill="#0000D0"/></svg>

<!-- W3 positions -->
<div class="w ac" style="left:12px;top:366px;width:931px;height:139px"></div>
<svg class="ic" style="left:17px;top:373px" width="15" height="16" viewBox="0 0 15 16"><path d="M0 4l4-4h11v12l-4 4H0z" fill="#445"/><rect x="4" y="2" width="9" height="10" fill="#DDE"/><path d="M5 4h7M5 6h7M5 8h7M5 10h7" stroke="#333" stroke-dasharray="1 1"/></svg>
<div class="t on" style="left:36px;top:373px">Позиции по клиентским счетам (фьючерсы)</div>
<div class="on"><i class="b mn" style="left:871px;top:372px"></i><i class="b mx" style="left:894px;top:372px"></i><i class="b x on" style="left:918px;top:372px"></i></div>
<table style="left:15px;top:395px;width:925px">
<colgroup><col style="width:20px"><col style="width:56px"><col style="width:38px"><col style="width:66px"><col style="width:19px"><col style="width:20px"><col style="width:91px"><col style="width:19px"><col style="width:19px"><col style="width:96px"><col style="width:57px"><col style="width:40px"><col style="width:53px"><col style="width:36px"><col style="width:112px"><col style="width:39px"><col style="width:129px"><col style="width:15px"></colgroup>
<tr><th></th><th>Торговый</th><th>Кратк</th><th>Дата погаг</th><th>Вх</th><th>Вх</th><th>Вход. чист. поз</th><th>Те</th><th>Те</th><th>Тек. чист. поз.</th><th>Акт. поку</th><th>Акт. п</th><th>Оценка</th><th>План.</th><th>Вариац. маржа</th><th>Эффе</th><th>Стоимость позиций</th><th></th></tr>
<tr><td class="h">1</td><td class="l">A70162R</td><td class="l" style="padding-left:6px">LKZ2</td><td>14.12.2012</td><td>0</td><td>0</td><td>0</td><td>0</td><td>0</td><td>0</td><td>0</td><td>0</td><td>0,00</td><td>0,00</td><td>0,00</td><td>0</td><td>0,00</td><td></td></tr>
<tr><td class="h">2</td><td class="l">A70162R</td><td class="l" style="padding-left:6px">SRZ2</td><td>14.12.2012</td><td>4</td><td>0</td><td>4</td><td>0</td><td>0</td><td>4</td><td>0</td><td>0</td><td>0,00</td><td>0,00</td><td>-24,00</td><td>0</td><td>0,00</td><td></td></tr>
<tr><td class="h">3</td><td class="l">A70162R</td><td class="l" style="padding-left:6px">SiZ2</td><td>17.12.2012</td><td>0</td><td>0</td><td>0</td><td>0</td><td>0</td><td>0</td><td>0</td><td>0</td><td>0,00</td><td>0,00</td><td>0,00</td><td>0</td><td>0,00</td><td></td></tr>
<tr><td class="h">4</td><td class="l">A70162R</td><td class="l" style="padding-left:6px">GZZ2</td><td>14.12.2012</td><td>0</td><td>0</td><td>2</td><td>0</td><td>0</td><td>2</td><td>0</td><td>0</td><td>0,00</td><td>0,00</td><td>46,00</td><td>0</td><td>0,00</td><td></td></tr>
<tr class="s"><td class="h">5</td><td class="l">A70162R</td><td class="l" style="padding-left:6px">EDZ2</td><td>17.12.2012</td><td>0</td><td>0</td><td>-1</td><td>0</td><td>1</td><td>-2</td><td>0</td><td>0</td><td>0,00</td><td>0,00</td><td>-50,22</td><td style="padding:1px 3px 0 0">0,0000</td><td>0,00</td><td></td></tr>
<tr class="sp"><td style="height:17px;background:#ECE9D8"></td><td></td><td></td><td></td><td></td><td></td><td></td><td></td><td></td><td></td><td></td><td></td><td></td><td></td><td></td><td></td><td></td><td></td></tr>
</table>

<!-- minimized windows -->
<div class="w" style="left:160px;top:888px;width:159px;height:31px;border:1px solid #8FA2E8;border-radius:6px;background:linear-gradient(#7E97E2,#7E9CE3)"></div>
<svg class="ic" style="left:165px;top:896px" width="15" height="15"><use href="#cw"/></svg><div class="t" style="left:185px;top:896px">RNZ&nbsp; 2...</div><i class="b rs" style="left:248px;top:894px"></i><i class="b mx" style="left:272px;top:894px"></i><i class="b x" style="left:295px;top:894px"></i>
<div class="w" style="left:0;top:918px;width:159px;height:31px;border:1px solid #8FA2E8;border-radius:6px;background:linear-gradient(#7E97E2,#7E9CE3)"></div>
<svg class="ic" style="left:5px;top:926px" width="15" height="15"><use href="#cw"/></svg><div class="t" style="left:25px;top:926px">GMZ&nbsp; 4...</div><i class="b rs" style="left:88px;top:923px"></i><i class="b mx" style="left:112px;top:923px"></i><i class="b x" style="left:135px;top:923px"></i>
<div class="w" style="left:160px;top:918px;width:159px;height:31px;border:1px solid #8FA2E8;border-radius:6px;background:linear-gradient(#7E97E2,#7E9CE3)"></div>
<svg class="ic" style="left:165px;top:926px" width="15" height="15"><use href="#cw"/></svg><div class="t" style="left:185px;top:926px">SRZ&nbsp; 2...</div><i class="b rs" style="left:248px;top:923px"></i><i class="b mx" style="left:272px;top:923px"></i><i class="b x" style="left:295px;top:923px"></i>
<div class="w" style="left:321px;top:918px;width:158px;height:31px;border:1px solid #8FA2E8;border-radius:6px;background:linear-gradient(#7E97E2,#7E9CE3)"></div>
<svg class="ic" style="left:326px;top:926px" width="15" height="15"><use href="#cw"/></svg><div class="t" style="left:345px;top:926px">EDZ&nbsp; 5...</div><i class="b rs" style="left:408px;top:923px"></i><i class="b mx" style="left:432px;top:923px"></i><i class="b x" style="left:455px;top:923px"></i>
<div class="w" style="left:481px;top:918px;width:158px;height:31px;border:1px solid #8FA2E8;border-radius:6px;background:linear-gradient(#7E97E2,#7E9CE3)"></div>
<svg class="ic" style="left:486px;top:926px" width="15" height="15"><use href="#cw"/></svg><div class="t" style="left:505px;top:926px">LKZ&nbsp; 6...</div><i class="b rs" style="left:568px;top:923px"></i><i class="b mx" style="left:592px;top:923px"></i><i class="b x" style="left:615px;top:923px"></i>
<div class="w" style="left:642px;top:917px;width:158px;height:31px;border:1px solid #8FA2E8;border-radius:6px;background:linear-gradient(#7E97E2,#7E9CE3)"></div>
<svg class="ic" style="left:646px;top:925px" width="15" height="15"><use href="#cw"/></svg><div class="t" style="left:666px;top:924px">SI&nbsp; 30 ...</div><i class="b rs" style="left:729px;top:922px"></i><i class="b mx" style="left:752px;top:922px"></i><i class="b x" style="left:776px;top:922px"></i>
<div class="w" style="left:961px;top:918px;width:158px;height:31px;border:1px solid #8FA2E8;border-radius:6px;background:linear-gradient(#7E97E2,#7E9CE3)"></div>
<svg class="ic" style="left:966px;top:926px" width="15" height="15"><use href="#cw"/></svg><div class="t" style="left:985px;top:926px">GZZ&nbsp; 1...</div><i class="b rs" style="left:1048px;top:923px"></i><i class="b mx" style="left:1072px;top:923px"></i><i class="b x" style="left:1095px;top:923px"></i>
<div class="w" style="left:1121px;top:918px;width:158px;height:31px;border:1px solid #8FA2E8;border-radius:6px;background:linear-gradient(#7E97E2,#7E9CE3)"></div>
<svg class="ic" style="left:1126px;top:926px" width="15" height="15"><use href="#cw"/></svg><div class="t" style="left:1145px;top:926px">MXZ&nbsp; 6...</div><i class="b rs" style="left:1208px;top:923px"></i><i class="b mx" style="left:1232px;top:923px"></i><i class="b x" style="left:1255px;top:923px"></i>

<!-- tabs -->
<div class="bar" style="top:950px;height:44px"></div>
<div class="tab" style="left:2px;width:60px">Торговля</div>
<div class="tab" style="left:63px;width:60px">Портфель</div>
<div class="tab" style="left:124px;width:50px;top:950px;height:22px;background:#F2F0E4;line-height:19px">FORTS</div>
<div class="tab" style="left:175px;width:54px">Графики</div>
<div class="tab" style="left:230px;width:54px">Новости</div>
<div class="tab" style="left:285px;width:55px">Газпром</div>
<div class="bar" style="top:972px;height:2px;background:#fff;border-top:1px solid #ACA899"></div>

<!-- status -->
<div class="st" style="left:1px;border:0;font-size:11.5px;letter-spacing:-.23px">Время сервера: 20:04:53; последняя полученная запись: 4237383</div>
<div class="st" style="left:911px;width:142px;padding-left:24px;letter-spacing:-.25px">10.21.133.155:15100</div>
<div class="st" style="left:1054px;width:78px"></div>
<div class="st" style="left:1135px;width:25px"></div>
<div class="st" style="left:1161px;width:21px"></div>
<div class="st" style="left:1185px;width:95px;padding-left:22px;letter-spacing:-.3px">30.10.2012</div>
<svg class="ic" style="left:914px;top:977px" width="18" height="17" viewBox="0 0 18 17"><rect x="1" y="1" width="6" height="4" fill="#22DDE0" stroke="#222"/><rect x="1" y="11" width="6" height="4" fill="#22DDE0" stroke="#222"/><circle cx="12" cy="9" r="4" fill="#fff" stroke="#222"/><path d="M4 5v6M4 3h10M4 15h12" stroke="#2040C0" fill="none"/></svg>
<svg class="ic" style="left:1164px;top:980px" width="14" height="11"><rect x=".5" y=".5" width="13" height="10" fill="#fff" stroke="#111"/><path d="M1 1l6 6 6-6" stroke="#111" fill="none"/></svg>
<svg class="ic" style="left:1190px;top:979px" width="11" height="12"><ellipse cx="5.500" cy="6" rx="5" ry="5.500" fill="#0ED00E" stroke="#0A900A"/></svg>

<!-- taskbar -->
<div class="bar" style="top:994px;height:30px;background:linear-gradient(#1F2F86 0,#3165C4 1px,#3682E5 2px,#4490E6 3px,#3883E5 4px,#2B71E0 5px,#235BD6 6px,#2157D6 12px,#245DDB 16px,#2562DF 26px,#2158D4 28px,#1941A5 30px)"></div>
<div class="a" style="left:0;top:994px;width:96px;height:30px;border-radius:0 10px 10px 0;background:linear-gradient(#5EAC56 0,#3C873C 3px,#3E8F3E 14px,#3A8A3A 26px,#2C6F2C 30px);box-shadow:inset -2px 0 3px #1E5A1E"></div>
<svg class="ic" style="left:11px;top:1000px" width="20" height="18" viewBox="0 0 20 18"><path d="M4 1l6 2-2 6-6-2z" fill="#E8502A"/><path d="M11 3l7 2-2 6-7-2z" fill="#62B842"/><path d="M2 8l5 2-2 6-5-2z" fill="#3A7FE8"/><path d="M8 10l7 2-2 6-7-2z" fill="#F5C52A"/></svg>
<div class="a" style="left:35px;top:997px;color:#fff;font-size:18px;line-height:24px;font-weight:bold;font-style:italic;text-shadow:1px 1px 1px #1E4E1E">start</div>
<svg class="ic" style="left:110px;top:1001px" width="15" height="15"><use href="#chrome"/></svg>
<svg class="ic" style="left:130px;top:1001px" width="16" height="16" viewBox="0 0 16 16"><rect x="2" y="2" width="12" height="13" rx="2" fill="#EAF2FF" stroke="#2050A0"/><path d="M5 1v3M11 1v3" stroke="#333"/><circle cx="8" cy="9" r="3" fill="none" stroke="#2050A0"/></svg>
<div class="tb" style="left:159px;width:158px"><svg width="16" height="16"><use href="#chrome"/></svg>"Kane Rand" Lace Up ...</div>
<div class="tb" style="left:319px;width:158px"><svg width="16" height="16"><use href="#chrome"/></svg>Hjkghjkghjkgjh Ghjkg...</div>
<div class="tb" style="left:479px;width:158px"><svg width="16" height="16"><use href="#chrome"/></svg>Два.ч — Бизнес - - G...</div>
<div class="tb" style="left:640px;width:157px;padding-left:27px"><svg width="16" height="16" viewBox="0 0 16 16"><path d="M1 3h5l1 2h8v10H1z" fill="#F3C95E" stroke="#8A6A20"/><rect x="5" y="7" width="8" height="7" fill="#BFD8F8"/></svg>Start Menu</div>
<div class="tb" style="left:798px;width:160px;background:#1E52B7;box-shadow:inset 1px 1px 2px #12357C;padding-left:31px"><svg width="16" height="16" viewBox="0 0 17 17"><rect width="17" height="17" rx="2" fill="#1F7F6A"/><circle cx="8.500" cy="8" r="5" fill="none" stroke="#fff" stroke-width="3"/><path d="M9 12l3 4" stroke="#fff" stroke-width="2.400"/></svg>[4F8BC&nbsp; UID: 21601] ...</div>
<div class="a" style="left:1197px;top:1000px;color:#D8E8FF;font-size:12px;line-height:18px;letter-spacing:-.3px;background:#2B5FD0;padding:0 1px">EN</div>
<div class="a" style="left:1224px;top:994px;width:56px;height:30px;background:linear-gradient(#0C59B9 0,#139EE9 2px,#18B5F2 3px,#139BEB 5px,#1290E8 8px,#0D8DEA 15px,#0F9EED 26px,#119BEE 28px,#0D6BD0 30px)"></div>
<svg class="ic" style="left:1214px;top:1000px" width="19" height="19" viewBox="0 0 19 19"><circle cx="9.500" cy="9.500" r="9" fill="#2F7FE0" stroke="#BFE0FF"/><path d="M11.500 5L7 9.500l4.500 4.500" fill="none" stroke="#fff" stroke-width="2.500"/></svg>
<div class="a" style="left:1239px;top:1000px;color:#fff;font-size:12px;line-height:18px">20:04</div>
</body></html>
